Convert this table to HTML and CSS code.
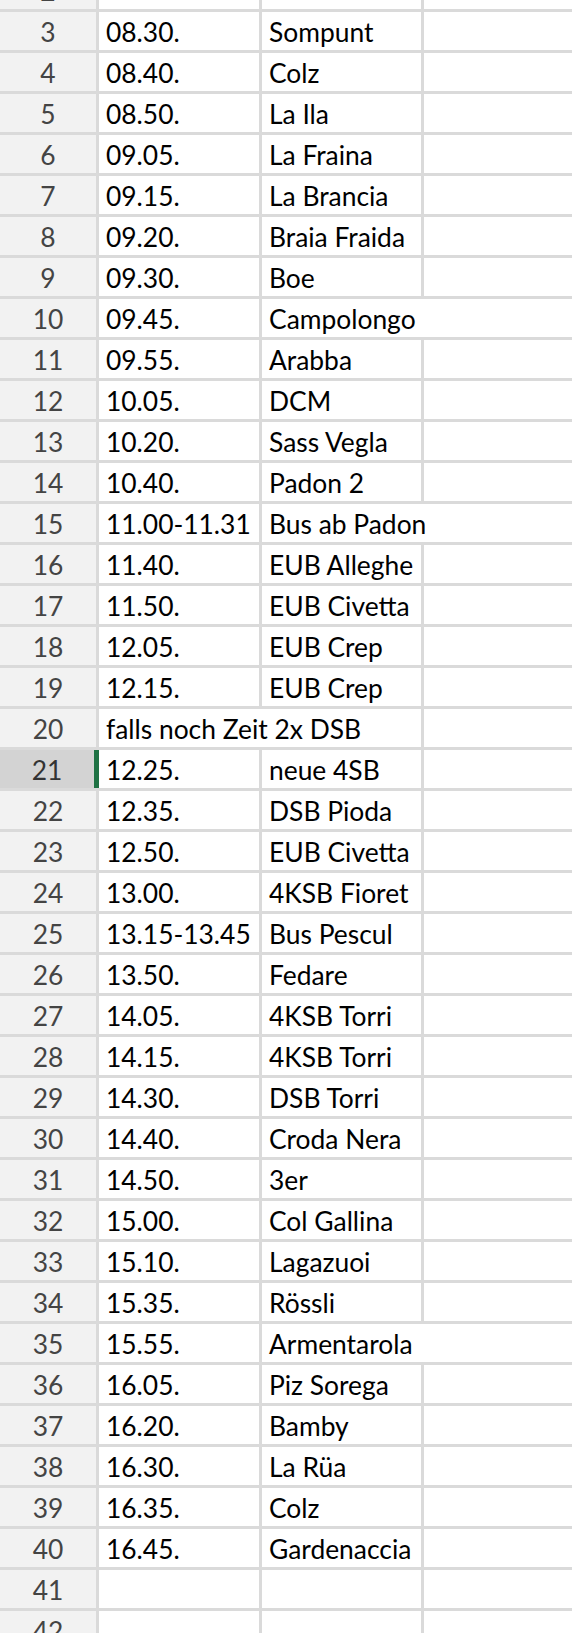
FILE: index.html
```html
<!DOCTYPE html>
<html lang="de">
<head>
<meta charset="utf-8">
<title>Tabelle</title>
<link rel="stylesheet" href="styles.css">
</head>
<body>
<div class="sheet">
  <div class="rows">
    <div class="row"><div class="rh">2</div><div class="c cb"></div><div class="c cc"></div><div class="c cd"></div></div>
    <div class="row"><div class="rh">3</div><div class="c cb">08.30.</div><div class="c cc">Sompunt</div><div class="c cd"></div></div>
    <div class="row"><div class="rh">4</div><div class="c cb">08.40.</div><div class="c cc">Colz</div><div class="c cd"></div></div>
    <div class="row"><div class="rh">5</div><div class="c cb">08.50.</div><div class="c cc">La Ila</div><div class="c cd"></div></div>
    <div class="row"><div class="rh">6</div><div class="c cb">09.05.</div><div class="c cc">La Fraina</div><div class="c cd"></div></div>
    <div class="row"><div class="rh">7</div><div class="c cb">09.15.</div><div class="c cc">La Brancia</div><div class="c cd"></div></div>
    <div class="row"><div class="rh">8</div><div class="c cb">09.20.</div><div class="c cc">Braia Fraida</div><div class="c cd"></div></div>
    <div class="row"><div class="rh">9</div><div class="c cb">09.30.</div><div class="c cc">Boe</div><div class="c cd"></div></div>
    <div class="row"><div class="rh">10</div><div class="c cb">09.45.</div><div class="c cc ov">Campolongo</div><div class="c cd"></div></div>
    <div class="row"><div class="rh">11</div><div class="c cb">09.55.</div><div class="c cc">Arabba</div><div class="c cd"></div></div>
    <div class="row"><div class="rh">12</div><div class="c cb">10.05.</div><div class="c cc">DCM</div><div class="c cd"></div></div>
    <div class="row"><div class="rh">13</div><div class="c cb">10.20.</div><div class="c cc">Sass Vegla</div><div class="c cd"></div></div>
    <div class="row"><div class="rh">14</div><div class="c cb">10.40.</div><div class="c cc">Padon 2</div><div class="c cd"></div></div>
    <div class="row"><div class="rh">15</div><div class="c cb">11.00-11.31</div><div class="c cc ov">Bus ab Padon</div><div class="c cd"></div></div>
    <div class="row"><div class="rh">16</div><div class="c cb">11.40.</div><div class="c cc">EUB Alleghe</div><div class="c cd"></div></div>
    <div class="row"><div class="rh">17</div><div class="c cb">11.50.</div><div class="c cc">EUB Civetta</div><div class="c cd"></div></div>
    <div class="row"><div class="rh">18</div><div class="c cb">12.05.</div><div class="c cc">EUB Crep</div><div class="c cd"></div></div>
    <div class="row"><div class="rh">19</div><div class="c cb">12.15.</div><div class="c cc">EUB Crep</div><div class="c cd"></div></div>
    <div class="row"><div class="rh">20</div><div class="c cb ov">falls noch Zeit 2x DSB</div><div class="c cc"></div><div class="c cd"></div></div>
    <div class="row"><div class="rh sel">21</div><div class="c cb">12.25.</div><div class="c cc">neue 4SB</div><div class="c cd"></div></div>
    <div class="row"><div class="rh">22</div><div class="c cb">12.35.</div><div class="c cc">DSB Pioda</div><div class="c cd"></div></div>
    <div class="row"><div class="rh">23</div><div class="c cb">12.50.</div><div class="c cc">EUB Civetta</div><div class="c cd"></div></div>
    <div class="row"><div class="rh">24</div><div class="c cb">13.00.</div><div class="c cc">4KSB Fioret</div><div class="c cd"></div></div>
    <div class="row"><div class="rh">25</div><div class="c cb">13.15-13.45</div><div class="c cc">Bus Pescul</div><div class="c cd"></div></div>
    <div class="row"><div class="rh">26</div><div class="c cb">13.50.</div><div class="c cc">Fedare</div><div class="c cd"></div></div>
    <div class="row"><div class="rh">27</div><div class="c cb">14.05.</div><div class="c cc">4KSB Torri</div><div class="c cd"></div></div>
    <div class="row"><div class="rh">28</div><div class="c cb">14.15.</div><div class="c cc">4KSB Torri</div><div class="c cd"></div></div>
    <div class="row"><div class="rh">29</div><div class="c cb">14.30.</div><div class="c cc">DSB Torri</div><div class="c cd"></div></div>
    <div class="row"><div class="rh">30</div><div class="c cb">14.40.</div><div class="c cc">Croda Nera</div><div class="c cd"></div></div>
    <div class="row"><div class="rh">31</div><div class="c cb">14.50.</div><div class="c cc">3er</div><div class="c cd"></div></div>
    <div class="row"><div class="rh">32</div><div class="c cb">15.00.</div><div class="c cc">Col Gallina</div><div class="c cd"></div></div>
    <div class="row"><div class="rh">33</div><div class="c cb">15.10.</div><div class="c cc">Lagazuoi</div><div class="c cd"></div></div>
    <div class="row"><div class="rh">34</div><div class="c cb">15.35.</div><div class="c cc">Rössli</div><div class="c cd"></div></div>
    <div class="row"><div class="rh">35</div><div class="c cb">15.55.</div><div class="c cc ov">Armentarola</div><div class="c cd"></div></div>
    <div class="row"><div class="rh">36</div><div class="c cb">16.05.</div><div class="c cc">Piz Sorega</div><div class="c cd"></div></div>
    <div class="row"><div class="rh">37</div><div class="c cb">16.20.</div><div class="c cc">Bamby</div><div class="c cd"></div></div>
    <div class="row"><div class="rh">38</div><div class="c cb">16.30.</div><div class="c cc">La Rüa</div><div class="c cd"></div></div>
    <div class="row"><div class="rh">39</div><div class="c cb">16.35.</div><div class="c cc">Colz</div><div class="c cd"></div></div>
    <div class="row"><div class="rh">40</div><div class="c cb">16.45.</div><div class="c cc">Gardenaccia</div><div class="c cd"></div></div>
    <div class="row"><div class="rh">41</div><div class="c cb"></div><div class="c cc"></div><div class="c cd"></div></div>
    <div class="row"><div class="rh">42</div><div class="c cb"></div><div class="c cc"></div><div class="c cd"></div></div>
  </div>
</div>
</body>
</html>
```

FILE: styles.css
```css
html, body {
  margin: 0;
  padding: 0;
  background: #ffffff;
}

.sheet {
  width: 572px;
  height: 1633px;
  overflow: hidden;
  background: #ffffff;
  font-family: Lato, "Open Sans", "Liberation Sans", sans-serif;
  font-size: 26.4px;
  color: #000000;
}

.rows {
  margin-top: -29px;
  display: flex;
  flex-direction: column;
}

.row {
  display: flex;
  height: 41px;
  box-sizing: border-box;
  border-bottom: 3px solid #dadada;
}

.rh,
.c {
  display: flex;
  align-items: flex-end;
  box-sizing: border-box;
  line-height: 1.2;
  padding-bottom: 1px;
  white-space: nowrap;
}

.rh {
  flex: none;
  width: 99px;
  justify-content: center;
  background: #f2f2f2;
  color: #444444;
  border-right: 3px solid #dadada;
}

.rh.sel {
  background: #d3d3d3;
  color: #333333;
  border-right: 5px solid #1f7244;
}

.c {
  padding-left: 7px;
  border-right: 3px solid #dadada;
}

.cb {
  flex: none;
  width: 163px;
}

.cc {
  flex: none;
  width: 162px;
}

.cd {
  flex: 1;
  border-right: none;
}

.c.ov {
  border-right-color: #ffffff;
}
```
